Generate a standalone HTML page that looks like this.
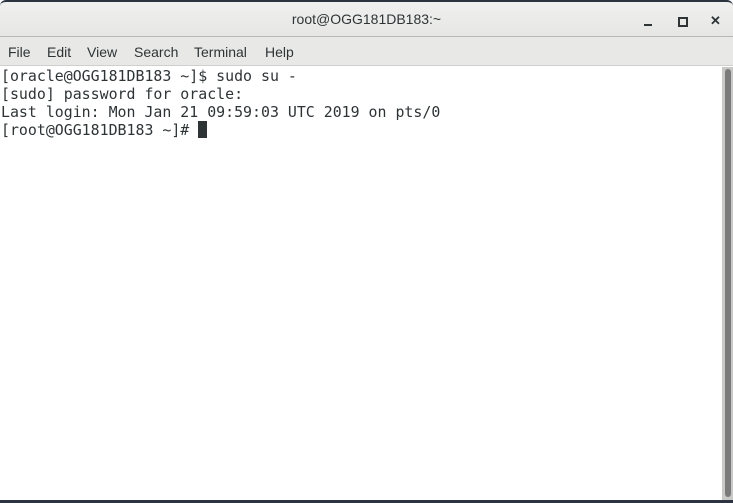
<!DOCTYPE html>
<html><head><style>
html,body{margin:0;padding:0;width:733px;height:503px;overflow:hidden;background:#fff}
.title{position:absolute;left:0;top:0;width:733px;height:37px;background:linear-gradient(#f0f0ef,#e6e6e5);border-top:2px solid #2c3440;box-sizing:border-box;border-radius:6px 6px 0 0;border-bottom:1px solid #b8b8b6}
.title .t{position:absolute;left:0;right:0;top:9px;text-align:center;font:14px "Liberation Sans",sans-serif;color:#2e3436}
.min{position:absolute;left:644px;top:22px;width:8px;height:2px;background:#2e3436}
.max{position:absolute;left:678px;top:15px;width:6px;height:6px;border:2px solid #2e3436}
.cls{position:absolute;left:710px;top:11px;font:bold 13px "Liberation Sans",sans-serif;color:#2e3436}
.menu{position:absolute;left:0;top:37px;width:733px;height:29px;background:#e8e8e7;border-bottom:1px solid #cfcfcd;box-sizing:border-box}
.menu span{position:absolute;top:7px;font:14px "Liberation Sans",sans-serif;color:#2e3436}
.term{position:absolute;left:1px;top:67px;font:14.9px/18px "DejaVu Sans Mono",monospace;color:#2e3436;white-space:pre}
.cur{display:inline-block;width:9px;height:17px;background:#2e3436;vertical-align:-3px}
.trough{position:absolute;left:722px;top:67px;width:11px;height:433px;background:#c9c9c8}
.thumb{position:absolute;left:725px;top:69px;width:6px;height:428px;background:#7b7b7b;border-radius:3px}
.bot{position:absolute;left:0;top:500px;width:733px;height:3px;background:#2c3440}
</style></head><body>
<div class="title"><div class="t">root@OGG181DB183:~</div><div class="min"></div><div class="max"></div><div class="cls">✕</div></div>
<div class="menu"><span style="left:8px">File</span><span style="left:47px">Edit</span><span style="left:87px">View</span><span style="left:134px">Search</span><span style="left:194px">Terminal</span><span style="left:265px">Help</span></div>
<div class="term">[oracle@OGG181DB183 ~]$ sudo su -
[sudo] password for oracle:
Last login: Mon Jan 21 09:59:03 UTC 2019 on pts/0
[root@OGG181DB183 ~]# <span class="cur"></span></div>
<div class="trough"></div><div class="thumb"></div>
<div class="bot"></div>
</body></html>
